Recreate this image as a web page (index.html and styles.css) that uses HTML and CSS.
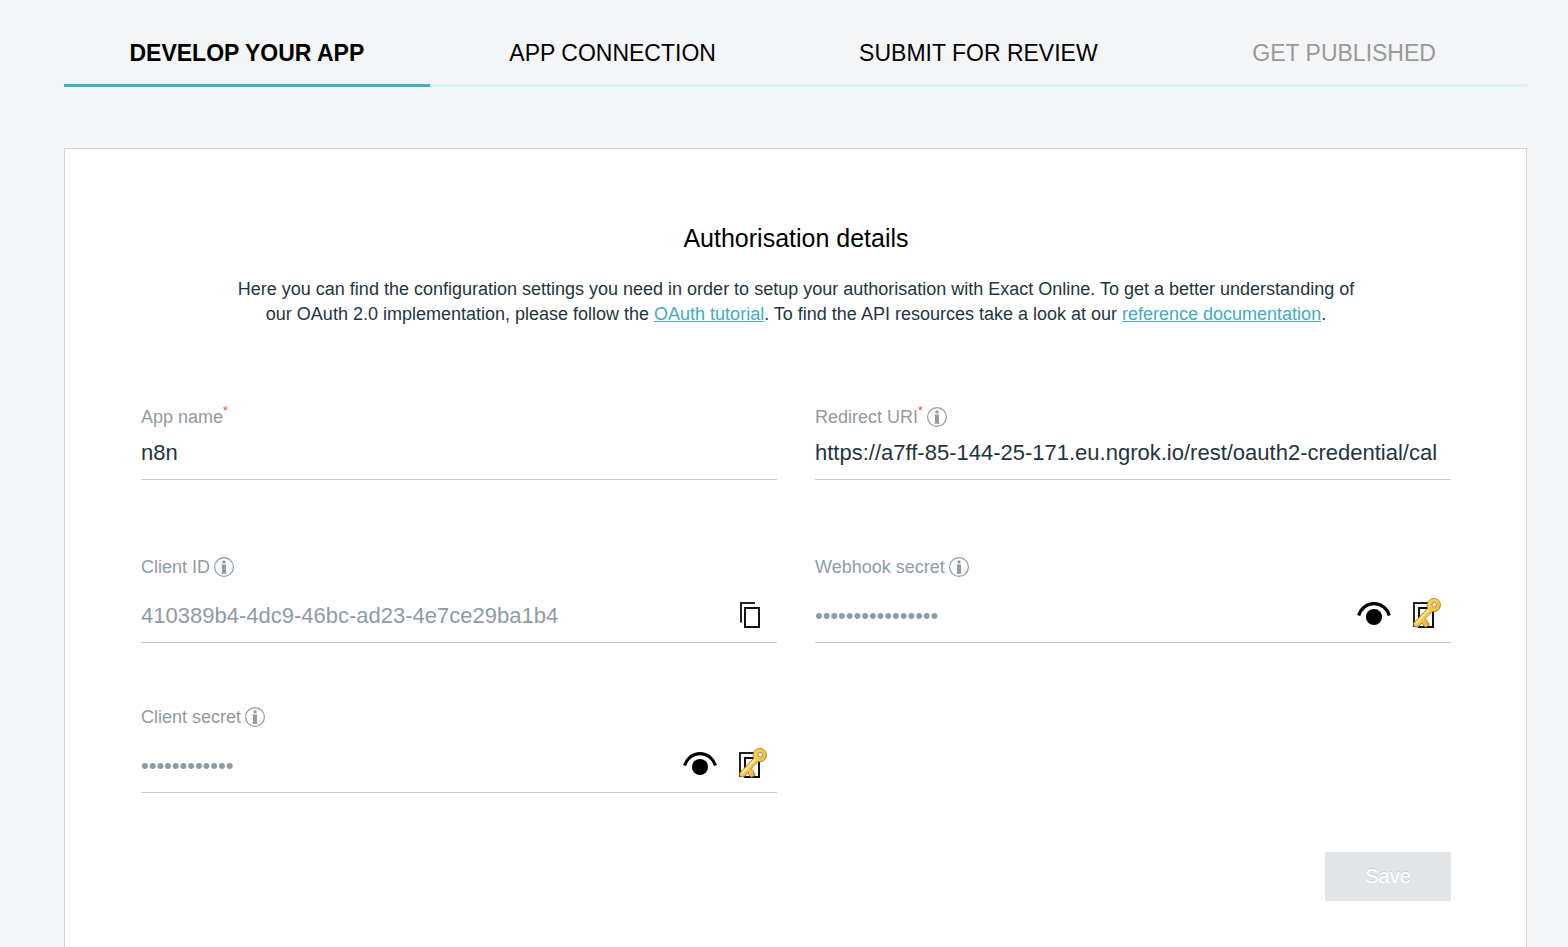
FILE: index.html
```html
<!DOCTYPE html>
<html lang="en">
<head>
<meta charset="utf-8">
<meta name="viewport" content="width=device-width, initial-scale=1">
<title>Authorisation details</title>
<link rel="stylesheet" href="styles.css">
</head>
<body>
<svg class="sprite" aria-hidden="true">
  <defs>
    <linearGradient id="gold" x1="0" y1="0" x2="1" y2="1">
      <stop offset="0" stop-color="#fbe58e"/>
      <stop offset="0.5" stop-color="#f5cb50"/>
      <stop offset="1" stop-color="#dfa02c"/>
    </linearGradient>
  </defs>
  <symbol id="info" viewBox="0 0 20 20">
    <circle cx="10" cy="10" r="9.4" fill="none" stroke="#8f9ba3" stroke-width="1.2"/>
    <circle cx="10" cy="4.9" r="1.7" fill="#8f9ba3"/>
    <path d="M7 7.400H12V16H12.600V16.800H7.400V16H8V8.200H7Z" fill="#8f9ba3"/>
  </symbol>
  <symbol id="copy" viewBox="0 0 30 32">
    <path d="M4 24.500V5H18" fill="none" stroke="#222" stroke-width="2"/>
    <rect x="8" y="10" width="14" height="19" fill="#fff" stroke="#111" stroke-width="2"/>
  </symbol>
  <symbol id="eye" viewBox="0 0 34 32">
    <path d="M1.700 17.500A15.800 15.800 0 0 1 32.300 17.500" fill="none" stroke="#000" stroke-width="3.200"/>
    <circle cx="17" cy="19" r="8.100" fill="#000"/>
  </symbol>
  <symbol id="key" viewBox="0 0 30 32">
    <path d="M7 28H3V5H19" fill="none" stroke="#222" stroke-width="2"/>
    <rect x="8" y="10" width="14" height="19" fill="#fff" stroke="#111" stroke-width="2"/>
    <path fill-rule="evenodd" fill="url(#gold)" stroke="#a06a20" stroke-width="0.8" stroke-linejoin="round" d="M22.800 0.500C27 0.500 29.400 3.600 29.400 7C29.400 11.500 25.500 14.600 21 13.500L14 20.800L16.500 23L16.200 24.600L18 25.500L18 27.200L14.500 29.200L12.500 27.600L11.200 24.600L7 29L3.200 28.600L2.500 25.300L16.500 10.500C15 5 18 0.500 22.800 0.500ZM23.200 4.400A2.300 2.300 0 1 0 23.200 9A2.300 2.300 0 1 0 23.200 4.400Z"/>
    <path d="M4.500 25.700L18.200 11.300" stroke="#fff0aa" stroke-width="1.400" fill="none"/>
  </symbol>
</svg>

<nav class="tabs" aria-label="App steps">
  <a class="tab tab-active" href="#develop" aria-current="step">DEVELOP YOUR APP</a>
  <a class="tab" href="#connection">APP CONNECTION</a>
  <a class="tab" href="#review">SUBMIT FOR REVIEW</a>
  <a class="tab tab-disabled" href="#published">GET PUBLISHED</a>
</nav>

<main class="card">
  <h1 class="title">Authorisation details</h1>
  <p class="intro">Here you can find the configuration settings you need in order to setup your authorisation with Exact Online. To get a better understanding of our OAuth 2.0 implementation, please follow the <a class="link" href="#tutorial">OAuth tutorial</a>. To find the API resources take a look at our <a class="link" href="#reference">reference documentation</a>.</p>

  <form class="form">
    <div class="field">
      <div class="label-row"><label class="label" for="app-name">App name<sup class="required">*</sup></label></div>
      <div class="control control-edit"><input class="input" id="app-name" type="text" value="n8n"></div>
    </div>
    <div class="field">
      <div class="label-row"><label class="label" for="redirect">Redirect URI<sup class="required">*</sup></label><svg class="info"><use href="#info"/></svg></div>
      <div class="control control-edit"><input class="input" id="redirect" type="text" value="https://a7ff-85-144-25-171.eu.ngrok.io/rest/oauth2-credential/cal"></div>
    </div>
    <div class="field">
      <div class="label-row"><label class="label" for="client-id">Client ID</label><svg class="info"><use href="#info"/></svg></div>
      <div class="control">
        <input class="input input-muted" id="client-id" type="text" value="410389b4-4dc9-46bc-ad23-4e7ce29ba1b4" readonly>
        <button class="icon-button" type="button" aria-label="Copy"><svg class="icon"><use href="#copy"/></svg></button>
      </div>
    </div>
    <div class="field">
      <div class="label-row"><label class="label" for="webhook">Webhook secret</label><svg class="info"><use href="#info"/></svg></div>
      <div class="control">
        <input class="input input-muted" id="webhook" type="password" value="0000000000000000" readonly>
        <button class="icon-button" type="button" aria-label="Show"><svg class="icon icon-eye"><use href="#eye"/></svg></button>
        <button class="icon-button" type="button" aria-label="Renew"><svg class="icon"><use href="#key"/></svg></button>
      </div>
    </div>
    <div class="field">
      <div class="label-row"><label class="label" for="client-secret">Client secret</label><svg class="info"><use href="#info"/></svg></div>
      <div class="control control-last">
        <input class="input input-muted" id="client-secret" type="password" value="000000000000" readonly>
        <button class="icon-button" type="button" aria-label="Show"><svg class="icon icon-eye"><use href="#eye"/></svg></button>
        <button class="icon-button" type="button" aria-label="Renew"><svg class="icon"><use href="#key"/></svg></button>
      </div>
    </div>
    <div class="actions"><button class="save" type="submit" disabled>Save</button></div>
  </form>
</main>
</body>
</html>
```
FILE: styles.css
```css
* {
  box-sizing: border-box;
}

body {
  display: flex;
  flex-direction: column;
  min-height: 100vh;
  margin: 0;
  padding: 20px 41px 0 64px;
  background: #f3f5f7;
  color: #1f3540;
  font-family: "Liberation Sans", Arial, sans-serif;
}

.sprite {
  position: absolute;
  width: 0;
  height: 0;
}

.tabs {
  display: grid;
  grid-template-columns: repeat(4, 1fr);
  margin-bottom: 61px;
}

.tab {
  padding: 17px 0 14px;
  border-bottom: 3px solid #dbf3f5;
  color: #000;
  font-size: 23px;
  line-height: 33px;
  text-align: center;
  text-decoration: none;
}

.tab-active {
  border-color: #3db1ca;
  font-weight: bold;
}

.tab-disabled {
  color: #999;
}

.card {
  flex: 1;
  padding: 73px 75px 45px 76px;
  border: 1px solid #cfd5d9;
  border-bottom: 0;
  background: #fff;
}

.title {
  margin: 0;
  color: #000;
  font-size: 25px;
  font-weight: normal;
  line-height: 32px;
  text-align: center;
}

.intro {
  max-width: 1130px;
  margin: 23px auto 0;
  font-size: 18px;
  line-height: 25px;
  text-align: center;
}

.link {
  color: #44a9c2;
}

.form {
  display: grid;
  grid-template-columns: 1fr 1fr;
  column-gap: 38px;
  padding-top: 78px;
}

.label-row {
  display: flex;
  align-items: center;
  gap: 4px;
  height: 24px;
}

.label {
  color: #8f9ba3;
  font-size: 18px;
  line-height: 24px;
}

.required {
  color: #e8501e;
  font-size: 12px;
  line-height: 0;
  vertical-align: 8px;
}

.info {
  width: 20px;
  height: 20px;
}

.control {
  display: flex;
  align-items: center;
  height: 64px;
  margin-bottom: 62px;
  padding: 7px 10px 0 0;
  border-bottom: 1px solid #ccc;
}

.control-edit {
  height: 51px;
  margin-bottom: 75px;
  padding: 0 0 2px;
}

.control-last {
  margin-bottom: 59px;
}

.input {
  flex: 1;
  min-width: 0;
  height: 40px;
  padding: 0;
  border: 0;
  outline: 0;
  background: transparent;
  color: #1f3540;
  font-family: inherit;
  font-size: 22px;
}

.input-muted {
  padding-top: 3px;
  color: #8f9ba3;
}

.icon-button {
  display: flex;
  margin-left: 20px;
  padding: 0;
  border: 0;
  background: none;
}

.icon {
  width: 30px;
  height: 32px;
}

.icon-eye {
  width: 34px;
}

.actions {
  grid-column: 1 / -1;
  display: flex;
  justify-content: flex-end;
}

.save {
  width: 126px;
  height: 49px;
  border: 0;
  border-radius: 2px;
  background: #e1e5e8;
  color: #fff;
  font-family: inherit;
  font-size: 20px;
  text-shadow: 0 -1px 0 #ccd0d3;
}
```
